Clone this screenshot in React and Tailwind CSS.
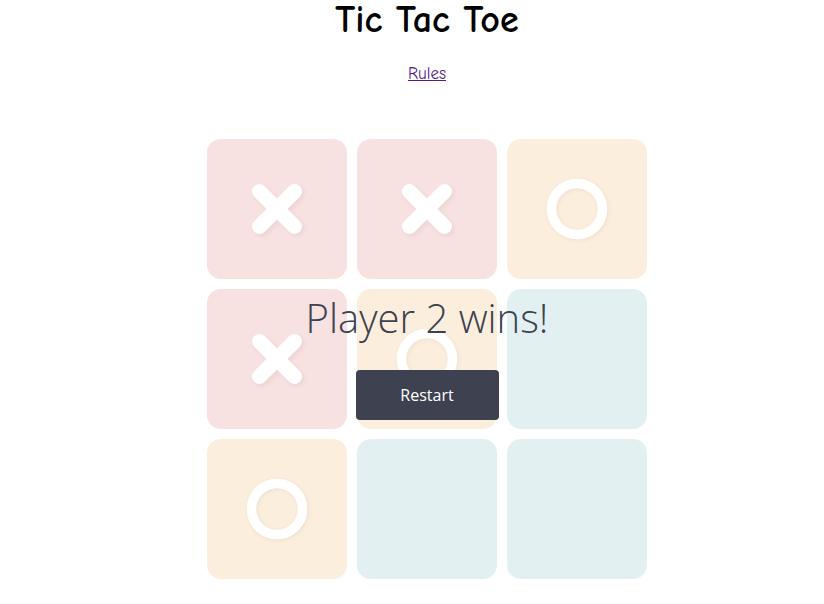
import React from "react";

const X = () => (
  <svg width="60" height="60" viewBox="0 0 60 60" className="drop-shadow-[2px_2px_2px_rgba(0,0,0,0.06)]">
    <g stroke="#ffffff" strokeWidth="15" strokeLinecap="round">
      <line x1="12.5" y1="12.5" x2="47.5" y2="47.5" />
      <line x1="47.5" y1="12.5" x2="12.5" y2="47.5" />
    </g>
  </svg>
);

const O = () => (
  <svg width="64" height="64" viewBox="0 0 64 64" className="drop-shadow-[1px_1px_2px_rgba(0,0,0,0.06)]">
    <circle cx="32" cy="32" r="25.5" fill="none" stroke="#ffffff" strokeWidth="9.5" />
  </svg>
);

const cells = ["x", "x", "o", "x", "o", "", "o", "", ""];

const bgFor = (v) =>
  v === "x" ? "bg-[#f8e1e1]" : v === "o" ? "bg-[#fbeedc]" : "bg-[#e3f0f2]";

export default function App() {
  return (
    <div className="w-[824px] h-[604px] bg-white flex flex-col items-center overflow-hidden pl-[30px]">
      <h1 className="text-[38px] font-bold leading-[40px] mt-0 text-black font-['Comic_Sans_MS','Comic_Neue',cursive]">
        Tic Tac Toe
      </h1>
      <a
        href="#"
        className="mt-[24px] text-[17px] leading-[20px] underline text-[#551a8b] font-['Comic_Sans_MS','Comic_Neue',cursive]"
      >
        Rules
      </a>
      <div className="relative mt-[55px]">
        <div className="grid grid-cols-[140px_140px_140px] gap-[10px]">
          {cells.map((v, i) => (
            <div
              key={i}
              className={`w-[140px] h-[140px] rounded-[14px] flex items-center justify-center ${bgFor(v)}`}
            >
              {v === "x" && <X />}
              {v === "o" && <O />}
            </div>
          ))}
        </div>
        <div className="absolute left-0 right-0 top-[150px] flex flex-col items-center">
          <div className="text-[40px] font-light leading-[58px] text-[#3d4150] font-['Open_Sans',sans-serif]">
            Player 2 wins!
          </div>
          <button className="mt-[23px] w-[143px] h-[50px] rounded-[4px] bg-[#3d4150] text-white text-[16px] font-['Open_Sans',sans-serif]">
            Restart
          </button>
        </div>
      </div>
    </div>
  );
}
